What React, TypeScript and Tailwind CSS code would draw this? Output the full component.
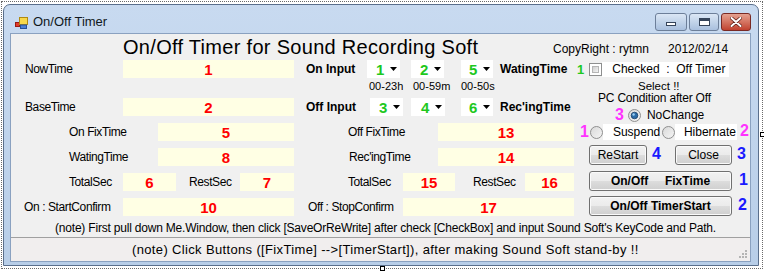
import React from 'react';

type Kids = { children?: React.ReactNode };

const Field = ({ w, children }: { w: string } & Kids) => (
  <div className={`${w} h-[18px] bg-[#ffffe4] flex items-center justify-center text-[15px] font-bold text-[#ff0000] leading-none tracking-normal`}>
    {children}
  </div>
);

const Combo = ({ w, n }: { w: string; n: string }) => (
  <div className={`${w} h-[18px] bg-white flex items-center justify-end pr-[3px] gap-[6px]`}>
    <span className="text-[15px] font-bold text-[#1ec81e] leading-none">{n}</span>
    <svg width="7" height="4" viewBox="0 0 7 4">
      <polygon points="0,0 7,0 3.5,4" fill="#000" />
    </svg>
  </div>
);

const Btn = ({ w, bold, children }: { w: string; bold?: boolean } & Kids) => (
  <div
    className={`${w} h-[20px] rounded-[3px] border border-[#707070] bg-[linear-gradient(to_bottom,#f2f2f2_0%,#ebebeb_50%,#dddddd_51%,#cfcfcf_100%)] shadow-[inset_0_0_0_1px_#fafafa] flex items-center justify-center whitespace-pre text-[12px] leading-none ${bold ? 'font-bold tracking-normal' : ''}`}
  >
    {children}
  </div>
);

const Radio = ({ on }: { on?: boolean }) => (
  <svg width="13" height="13" viewBox="0 0 13 13">
    <defs>
      <linearGradient id={on ? 'rg1' : 'rg0'} x1="0" y1="0" x2="1" y2="1">
        <stop offset="0" stopColor="#d8d8d8" />
        <stop offset="1" stopColor="#f6f6f6" />
      </linearGradient>
    </defs>
    <circle cx="6.5" cy="6.5" r="6" fill={`url(#${on ? 'rg1' : 'rg0'})`} stroke="#8f8f8f" />
    {on && <circle cx="6.5" cy="6.5" r="3.3" fill="#2b6ca8" stroke="#173c64" strokeWidth="0.8" />}
    {on && <circle cx="5.6" cy="5.5" r="1.2" fill="#9cd0f5" />}
  </svg>
);

const Check = () => (
  <div className="w-[13px] h-[13px] border border-[#8e8f8f] bg-white p-[2px]">
    <div className="w-full h-full border border-[#b5b5b5] bg-gradient-to-br from-[#cfcfcf] to-[#f4f4f4]" />
  </div>
);

const Num = ({ c, children }: { c: string } & Kids) => (
  <span className={`${c} text-[16px] font-bold leading-none tracking-normal`}>{children}</span>
);

export default function App() {
  return (
    <div className="w-[764px] h-[271px] bg-white p-px font-['Liberation_Sans',Arial,sans-serif] text-black">
      <div className="relative w-[762px] h-[268px] border border-dotted border-[#6a6a6a] pl-px pt-[2px]">
        <div className="w-[756px] h-[262px] rounded-t-[7px] border border-[#5a6f8c] bg-gradient-to-b from-[#c8daf0] to-[#b8cee8] flex flex-col">
          {/* title bar */}
          <div className="h-[28px] flex items-start pl-[11px] pr-[7px]">
            <svg className="mt-[12px]" width="13" height="12" viewBox="0 0 13 12">
              <rect x="0.5" y="5.5" width="4" height="4" fill="#e23b2a" stroke="#9a1c12" />
              <rect x="4.5" y="0.5" width="8" height="7" fill="#f7d84a" stroke="#b08a12" />
              <rect x="5.5" y="8" width="6" height="3.5" fill="#4d7fd6" stroke="#27509a" />
            </svg>
            <span className="ml-[5px] mt-[9px] text-[13px] leading-[16px] text-[#101820]">On/Off Timer</span>
            <div className="ml-auto mt-[8px] flex gap-[2px]">
              <div className="w-[32px] h-[18px] rounded-[3px] border border-[#6d7f99] bg-gradient-to-b from-[#dbe7f5] to-[#a9c0de] flex items-center justify-center">
                <div className="w-[10px] h-[4px] border border-[#35445a] bg-white mt-[4px]" />
              </div>
              <div className="w-[30px] h-[18px] rounded-[3px] border border-[#6d7f99] bg-gradient-to-b from-[#dbe7f5] to-[#a9c0de] flex items-center justify-center">
                <div className="w-[11px] h-[8px] border border-[#35445a] border-t-[3px] bg-white" />
              </div>
              <div className="w-[30px] h-[18px] rounded-[3px] border border-[#7a2a24] bg-gradient-to-b from-[#e4a190] to-[#c0412f] flex items-center justify-center">
                <svg width="12" height="10" viewBox="0 0 12 10">
                  <path d="M1.5 1 L10.5 9 M10.5 1 L1.5 9" stroke="#5a1a12" strokeWidth="3.4" strokeLinecap="round" />
                  <path d="M1.5 1 L10.5 9 M10.5 1 L1.5 9" stroke="#fff" strokeWidth="2" strokeLinecap="round" />
                </svg>
              </div>
            </div>
          </div>

          {/* client */}
          <div className="ml-[6px] w-[741px] h-[229px] border border-[#8aa1c0] bg-[#f0f0f0] flex flex-col text-[12px] tracking-[-0.4px]">
            <div className="h-[24px] flex items-start">
              <div className="w-[542px] pl-[112px] text-[20px] leading-[26px] tracking-[0.3px]">On/Off Timer for Sound Recording Soft</div>
              <div className="mt-[8px] flex leading-[14px] tracking-normal">
                <span>CopyRight : rytmn</span>
                <span className="ml-[19px]">2012/02/14</span>
              </div>
            </div>

            <div className="flex h-[159px]">
              {/* left block */}
              <div className="w-[563px] flex flex-col">
                <div className="mt-[1px] h-[20px] flex items-center">
                  <div className="w-[112px] pl-[14px]">NowTime</div>
                  <Field w="w-[171px]">1</Field>
                  <div className="w-[73px] pl-[12px] font-bold tracking-normal">On Input</div>
                  <Combo w="w-[33px]" n="1" />
                  <div className="w-[11px]" />
                  <Combo w="w-[33px]" n="2" />
                  <div className="w-[17px]" />
                  <Combo w="w-[32px]" n="5" />
                  <div className="pl-[7px] font-bold tracking-normal">WatingTime</div>
                </div>
                <div className="h-[14px] flex items-center text-[11px] tracking-normal leading-none">
                  <div className="w-[358px]" />
                  <div className="w-[44px]">00-23h</div>
                  <div className="w-[48px]">00-59m</div>
                  <div>00-50s</div>
                </div>
                <div className="mt-[4px] h-[20px] flex items-center">
                  <div className="w-[112px] pl-[14px]">BaseTime</div>
                  <Field w="w-[171px]">2</Field>
                  <div className="w-[76px] pl-[12px] font-bold tracking-normal">Off Input</div>
                  <Combo w="w-[33px]" n="3" />
                  <div className="w-[8px]" />
                  <Combo w="w-[34px]" n="4" />
                  <div className="w-[16px]" />
                  <Combo w="w-[32px]" n="6" />
                  <div className="pl-[7px] font-bold tracking-normal">Rec'ingTime</div>
                </div>
                <div className="mt-[5px] h-[20px] flex items-center">
                  <div className="w-[147px] pl-[58px]">On FixTime</div>
                  <Field w="w-[136px]">5</Field>
                  <div className="w-[144px] pl-[54px]">Off FixTime</div>
                  <Field w="w-[136px]">13</Field>
                </div>
                <div className="mt-[5px] h-[20px] flex items-center">
                  <div className="w-[147px] pl-[58px]">WatingTime</div>
                  <Field w="w-[136px]">8</Field>
                  <div className="w-[144px] pl-[55px]">Rec'ingTime</div>
                  <Field w="w-[136px]">14</Field>
                </div>
                <div className="mt-[5px] h-[20px] flex items-center">
                  <div className="w-[112px] pl-[58px]">TotalSec</div>
                  <Field w="w-[53px]">6</Field>
                  <div className="w-[64px] pl-[13px]">RestSec</div>
                  <Field w="w-[54px]">7</Field>
                  <div className="w-[109px] pl-[54px]">TotalSec</div>
                  <Field w="w-[52px]">15</Field>
                  <div className="w-[70px] pl-[18px]">RestSec</div>
                  <Field w="w-[49px]">16</Field>
                </div>
                <div className="mt-[5px] h-[20px] flex items-center">
                  <div className="w-[112px] pl-[13px]">On : StartConfirm</div>
                  <Field w="w-[171px]">10</Field>
                  <div className="w-[109px] pl-[14px]">Off : StopConfirm</div>
                  <Field w="w-[171px]">17</Field>
                </div>
              </div>

              {/* right block */}
              <div className="w-[176px] flex flex-col tracking-normal">
                <div className="mt-[1px] h-[20px] flex items-center">
                  <span className="pl-[3px] text-[13px] font-bold text-[#1ec81e] leading-none">1</span>
                  <div className="ml-[5px]">
                    <Check />
                  </div>
                  <div className="w-[127px] h-[15px] bg-white pl-[10px] flex items-center whitespace-pre leading-none">
                    Checked  :  Off Timer
                  </div>
                </div>
                <div className="mt-[1px] h-[12px] leading-[12px] pl-[64px] text-[11.5px]">Select !!</div>
                <div className="h-[13px] leading-[13px] pl-[24px] tracking-[-0.2px]">PC Condition after Off</div>
                <div className="mt-[2px] h-[16px] flex items-center pl-[41px]">
                  <Num c="text-[#ff33ff]">3</Num>
                  <div className="ml-[4px] flex">
                    <Radio on />
                  </div>
                  <span className="ml-[6px]">NoChange</span>
                </div>
                <div className="mt-[1px] h-[16px] flex items-center pl-[6px]">
                  <Num c="text-[#ff33ff]">1</Num>
                  <div className="ml-[1px] flex">
                    <Radio />
                  </div>
                  <div className="w-[55px] h-[16px] bg-white pl-[10px] flex items-center">Suspend</div>
                  <div className="ml-[4px] flex">
                    <Radio />
                  </div>
                  <div className="w-[62px] h-[16px] bg-white pl-[9px] flex items-center">Hibernate</div>
                  <span className="ml-[3px]">
                    <Num c="text-[#ff33ff]">2</Num>
                  </span>
                </div>
                <div className="mt-[5px] h-[20px] flex items-center pl-[15px]">
                  <Btn w="w-[58px]">ReStart</Btn>
                  <span className="ml-[5px] w-[23px]">
                    <Num c="text-[#1a1aff]">4</Num>
                  </span>
                  <Btn w="w-[57px]">Close</Btn>
                  <span className="ml-[5px]">
                    <Num c="text-[#1a1aff]">3</Num>
                  </span>
                </div>
                <div className="mt-[6px] h-[20px] flex items-center pl-[15px]">
                  <Btn w="w-[143px]" bold>
                    {'On/Off     FixTime'}
                  </Btn>
                  <span className="ml-[7px]">
                    <Num c="text-[#1a1aff]">1</Num>
                  </span>
                </div>
                <div className="mt-[5px] h-[20px] flex items-center pl-[15px]">
                  <Btn w="w-[143px]" bold>
                    On/Off TimerStart
                  </Btn>
                  <span className="ml-[6px]">
                    <Num c="text-[#1a1aff]">2</Num>
                  </span>
                </div>
              </div>
            </div>

            <div className="mt-[3px] h-[16px] leading-[16px] pl-[44px] tracking-[-0.2px]">
              (note) First pull down Me.Window, then click [SaveOrReWrite] after check [CheckBox] and input Sound Soft's KeyCode and Path.
            </div>

            <div className="mt-[1px] flex-1 border-t border-[#a0a0a0] bg-[#f1eeee] flex items-center relative">
              <div className="pl-[121px] text-[13px] tracking-[0.35px]">
                (note) Click Buttons ([FixTime] --&gt;[TimerStart]), after making Sound Soft stand-by !!
              </div>
              <svg className="absolute right-[2px] bottom-[2px]" width="10" height="10" viewBox="0 0 10 10">
                <g fill="#b4b4b4">
                  <rect x="7" y="1" width="2" height="2" />
                  <rect x="4" y="4" width="2" height="2" />
                  <rect x="7" y="4" width="2" height="2" />
                  <rect x="1" y="7" width="2" height="2" />
                  <rect x="4" y="7" width="2" height="2" />
                  <rect x="7" y="7" width="2" height="2" />
                </g>
              </svg>
            </div>
          </div>
        </div>
        {/* designer selection handles */}
        <div className="absolute right-[-3px] top-[130px] w-[5px] h-[5px] border border-black bg-white" />
        <div className="absolute bottom-[-3px] left-[378px] w-[5px] h-[5px] border border-black bg-white" />
      </div>
    </div>
  );
}
